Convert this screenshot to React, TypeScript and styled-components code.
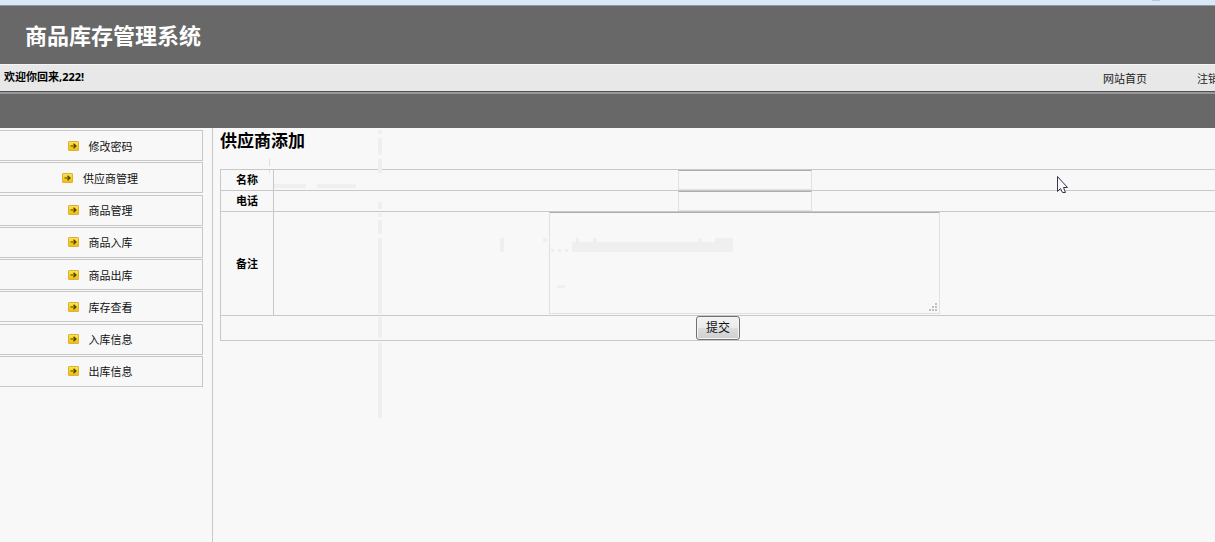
import React from "react";
import styled, { createGlobalStyle } from "styled-components";

const GlobalStyle = createGlobalStyle`
  *, *::before, *::after { box-sizing: border-box; }
  html, body { margin: 0; padding: 0; background: #f8f8f8; }
  body {
    font-family: "Noto Sans", "Noto Sans CJK SC", sans-serif;
    font-size: 11px;
    line-height: 16px;
    color: #000;
    overflow: hidden;
  }
`;

const Page = styled.div`
  position: relative;
  display: flex;
  flex-direction: column;
  min-height: 100vh;
  overflow: hidden;
`;

const WindowEdge = styled.div`
  height: 6px;
  background: #d8e8f8;
  border-bottom: 1px solid #8c9ba3;
`;

const Banner = styled.header`
  display: flex;
  align-items: center;
  height: 58px;
  padding: 0 25px;
  background: #686868;
`;

const SiteTitle = styled.h1`
  margin: 0;
  font-size: 22px;
  line-height: 32px;
  font-weight: 700;
  color: #fff;
`;

const WelcomeBar = styled.div`
  display: flex;
  justify-content: space-between;
  align-items: center;
  height: 28px;
  padding-left: 4px;
  background: #e8e8e8;
  border-top: 1px solid #f4f4f4;
  border-bottom: 1px solid #505050;
`;

const Welcome = styled.strong`
  padding-bottom: 2px;
`;

const TopNav = styled.nav`
  display: flex;
  gap: 50px;
  margin-right: -4px;
  padding-top: 2px;
  white-space: nowrap;
`;

const NavLink = styled.a`
  color: #222;
  text-decoration: none;
`;

const Band = styled.div`
  height: 36px;
  background: #686868;
  border-top: 2px solid #989898;
`;

const Columns = styled.div`
  display: flex;
  flex: 1;
`;

const Sidebar = styled.nav`
  flex: none;
  width: 213px;
  padding: 2px 9px 0 0;
  border-right: 1px solid #c8c8c8;
`;

const Menu = styled.ul`
  display: flex;
  flex-direction: column;
  justify-content: space-between;
  height: 257px;
  margin: 0;
  padding: 0;
  list-style: none;
`;

const MenuLink = styled.a`
  display: flex;
  justify-content: center;
  align-items: center;
  gap: 10px;
  height: 31px;
  border: 1px solid #c8c8c8;
  border-left: 0;
  padding: 2px 2px 0 0;
  color: #111;
  text-decoration: none;
`;

const MenuIcon = styled.svg`
  width: 11px;
  height: 10px;
  margin-bottom: 2px;
`;

const Main = styled.main`
  flex: 1;
  min-width: 0;
  margin-right: -1px;
  padding-left: 7px;
`;

const Heading = styled.h2`
  margin: 0 0 15px;
  font-size: 17px;
  line-height: 26px;
  font-weight: 700;
`;

const FormTable = styled.table`
  width: 100%;
  border-collapse: collapse;
  table-layout: fixed;
`;

const LabelCol = styled.col`
  width: 53px;
`;

const LabelCell = styled.th`
  padding: 0;
  border: 1px solid #c8c8c8;
  font-weight: 700;
  line-height: 14px;
`;

const Cell = styled.td`
  padding: 0;
  border: 1px solid #c8c8c8;
  text-align: center;
`;

const fieldStyle = `
  display: block;
  margin: 0 auto;
  background: #f8f8f8;
  border: 1px solid #e0e0e6;
  border-top-color: #abadb3;
  border-radius: 1px;
  font: inherit;
  outline: none;
`;

const TextInput = styled.input`
  ${fieldStyle}
  width: 134px;
  height: 20px;
  padding: 1px 2px;
`;

const NoteArea = styled.textarea`
  ${fieldStyle}
  width: 391px;
  height: 102px;
  margin: 0 auto 1px;
  padding: 2px;
  resize: none;
`;

const NoteWrap = styled.div`
  position: relative;
  width: 391px;
  margin: 0 auto;
`;

const Grip = styled.svg`
  position: absolute;
  right: 3px;
  bottom: 3px;
  width: 8px;
  height: 8px;
`;

const SubmitButton = styled.button`
  display: block;
  width: 44px;
  height: 24px;
  margin: 0 auto;
  padding: 0;
  border: 1px solid #707070;
  border-radius: 3px;
  background: linear-gradient(#f2f2f2 0%, #ebebeb 48%, #dddddd 52%, #cfcfcf 100%);
  box-shadow: inset 0 0 0 1px #f6f6f6;
  font: inherit;
  font-size: 12px;
  line-height: 20px;
  color: #111;
`;

const Traces = styled.svg`
  position: absolute;
  top: 0;
  left: 0;
  width: 1215px;
  height: 542px;
  pointer-events: none;
`;

const menuItems = [
  "修改密码",
  "供应商管理",
  "商品管理",
  "商品入库",
  "商品出库",
  "库存查看",
  "入库信息",
  "出库信息",
];

function ArrowIcon() {
  return (
    <MenuIcon viewBox="0 0 11 10" aria-hidden="true">
      <defs>
        <linearGradient id="gold" x1="0" y1="0" x2="0" y2="1">
          <stop offset="0" stopColor="#f8e070" />
          <stop offset="0.45" stopColor="#f8d818" />
          <stop offset="1" stopColor="#f0b820" />
        </linearGradient>
      </defs>
      <rect x="0.5" y="0.5" width="10" height="9" rx="0.5" fill="url(#gold)" stroke="#e0b030" />
      <path d="M2.5 5H8M5.5 2.7L8 5L5.5 7.3" fill="none" stroke="#4a3c08" strokeWidth="1.2" />
    </MenuIcon>
  );
}

/* Faint screen traces and the mouse pointer, lying over the page. */
function Overlay() {
  return (
    <Traces viewBox="0 0 1215 542" aria-hidden="true">
      <g fill="#efefef">
        <path d="M378 130h4v4h-4zM378 138h4v17h-4zM378 159h4v14h-4zM378 202h4v7h-4zM378 213h4v4h-4zM378 220h4v14h-4zM378 238h4v76h-4zM378 317h4v21h-4zM378 342h4v76h-4z" />
        <path d="M274 184h32v4h-32zM317 184h39v4h-39zM500 238h4v14h-4zM543 238h4v4h-4z" />
        <path d="M551 249h3v3h-3zM558 249h3v3h-3zM565 249h3v3h-3zM557 285h8v3h-8z" />
        <path d="M572 242h4v-4h3v4h14v-4h4v4h101v-4h3v4h14v-4h18v14h-161zM120 187h3v3h-3z" />
      </g>
      <path d="M269.5 159v7M269.5 170v3" stroke="#dcdce8" />
      <path d="M1152 0h8" stroke="#9aa8b5" />
      <path
        d="M1057.5 176.5V191.5L1060.5 188.5L1062.5 192.5H1065.5L1063.5 187.5H1067.5Z"
        fill="#f8f8f8"
        stroke="#38384c"
      />
    </Traces>
  );
}

export default function App() {
  return (
    <>
      <GlobalStyle />
      <Page lang="zh-CN">
        <WindowEdge />
        <Banner>
          <SiteTitle>商品库存管理系统</SiteTitle>
        </Banner>
        <WelcomeBar>
          <Welcome>欢迎你回来,222!</Welcome>
          <TopNav>
            <NavLink href="#home">网站首页</NavLink>
            <NavLink href="#logout">注销</NavLink>
          </TopNav>
        </WelcomeBar>
        <Band />
        <Columns>
          <Sidebar>
            <Menu>
              {menuItems.map((label) => (
                <li key={label}>
                  <MenuLink href={`#${label}`}>
                    <ArrowIcon />
                    {label}
                  </MenuLink>
                </li>
              ))}
            </Menu>
          </Sidebar>
          <Main>
            <Heading>供应商添加</Heading>
            <form onSubmit={(e) => e.preventDefault()}>
              <FormTable>
                <colgroup>
                  <LabelCol />
                  <col />
                </colgroup>
                <tbody>
                  <tr>
                    <LabelCell scope="row">
                      <label htmlFor="name">名称</label>
                    </LabelCell>
                    <Cell>
                      <TextInput id="name" type="text" />
                    </Cell>
                  </tr>
                  <tr>
                    <LabelCell scope="row">
                      <label htmlFor="phone">电话</label>
                    </LabelCell>
                    <Cell>
                      <TextInput id="phone" type="text" />
                    </Cell>
                  </tr>
                  <tr>
                    <LabelCell scope="row">
                      <label htmlFor="note">备注</label>
                    </LabelCell>
                    <Cell>
                      <NoteWrap>
                        <NoteArea id="note" />
                        <Grip viewBox="0 0 8 8" aria-hidden="true">
                          <path
                            d="M6 0h2v2h-2zM3 3h2v2h-2zM6 3h2v2h-2zM0 6h2v2h-2zM3 6h2v2h-2zM6 6h2v2h-2z"
                            fill="#c0c0c0"
                          />
                        </Grip>
                      </NoteWrap>
                    </Cell>
                  </tr>
                  <tr>
                    <Cell colSpan={2}>
                      <SubmitButton type="submit">提交</SubmitButton>
                    </Cell>
                  </tr>
                </tbody>
              </FormTable>
            </form>
          </Main>
        </Columns>
        <Overlay />
      </Page>
    </>
  );
}
